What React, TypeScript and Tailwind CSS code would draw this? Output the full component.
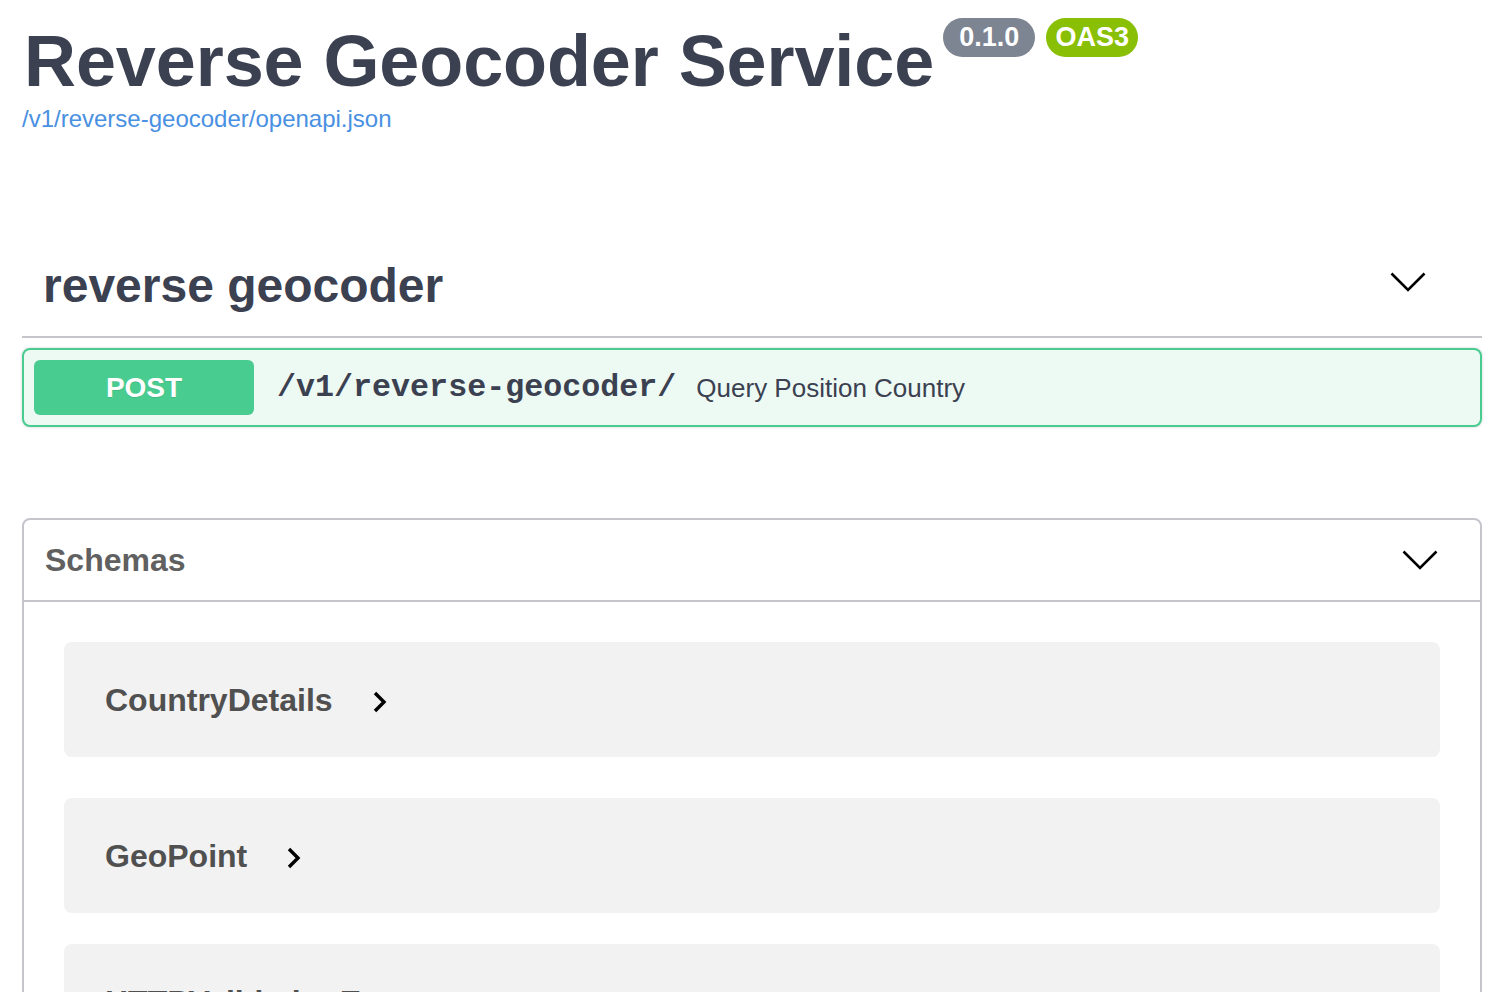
import React from 'react';

const sans = { fontFamily: '"Liberation Sans", Arial, sans-serif' };

function ChevronDown() {
  return (
    <svg width="36" height="20" viewBox="0 0 36 20" fill="none">
      <path d="M1.5 1.5 L18 18 L34.5 1.5" stroke="#000" strokeWidth="2.6" />
    </svg>
  );
}

function ChevronRight() {
  return (
    <svg width="14" height="22" viewBox="0 0 14 22" fill="none">
      <path d="M2 2 L11 11 L2 20" stroke="#000" strokeWidth="3.4" />
    </svg>
  );
}

function ModelItem({ name, className }: { name: string; className?: string }) {
  return (
    <div className={`mx-[40px] h-[115px] rounded-[8px] bg-[#f2f2f2] flex items-center pl-[41px] ${className ?? ''}`}>
      <span className="text-[32px] font-bold leading-none text-[#505050]">{name}</span>
      <span className="ml-[40px] mt-[4px] flex">
        <ChevronRight />
      </span>
    </div>
  );
}

export default function App() {
  return (
    <div className="min-h-screen bg-white text-[#3b4151] overflow-hidden" style={sans}>
      <div className="w-[1460px] ml-[22px] pt-[25px]">
        {/* info */}
        <div className="flex items-start pl-[2px]">
          <h2 className="text-[72px] font-bold leading-none text-[#3b4151] tracking-[-0.1px]">Reverse Geocoder Service</h2>
          <div className="flex gap-[11px] ml-[9px] -mt-[7px]">
            <span className="h-[39px] w-[92px] rounded-full bg-[#7d8492] text-white text-[27px] font-bold flex items-center justify-center">0.1.0</span>
            <span className="h-[39px] w-[92px] rounded-full bg-[#89bf04] text-white text-[27px] font-bold flex items-center justify-center">OAS3</span>
          </div>
        </div>
        <a className="block mt-[10px] text-[24px] leading-none text-[#4990e2]">/v1/reverse-geocoder/openapi.json</a>

        {/* tag */}
        <div className="mt-[131px] flex items-start justify-between border-b-2 border-[#c4c6cb] pl-[21px] pr-[56px] pb-[26px]">
          <h3 className="text-[48px] font-bold leading-none text-[#3b4151]">reverse geocoder</h3>
          <span className="mt-[10px] flex">
            <ChevronDown />
          </span>
        </div>

        <div className="mt-[10px] flex items-center rounded-[8px] border-2 border-[#49cc90] bg-[#edfaf4] p-[10px] shadow-[0_0_3px_rgba(0,0,0,0.19)]">
          <span className="h-[55px] w-[220px] rounded-[6px] bg-[#49cc90] text-white text-[28px] font-bold flex items-center justify-center [text-shadow:0_1px_0_rgba(0,0,0,0.1)]">POST</span>
          <span className="ml-[23px] mt-[2px] text-[31.7px] font-bold text-[#3b4151]" style={{ fontFamily: '"Liberation Mono", "Courier New", monospace' }}>/v1/reverse-geocoder/</span>
          <span className="ml-[20px] mt-[2px] text-[26px] text-[#3b4151]">Query Position Country</span>
        </div>

        {/* schemas */}
        <div className="mt-[91px] rounded-[8px] border-2 border-[#c4c6cb] pb-[40px]">
          <div className="flex items-center justify-between border-b-2 border-[#c4c6cb] pl-[21px] pr-[42px] py-[24px]">
            <h4 className="text-[32px] font-bold leading-none text-[#606060]">Schemas</h4>
            <ChevronDown />
          </div>
          <ModelItem name="CountryDetails" className="mt-[40px]" />
          <ModelItem name="GeoPoint" className="mt-[41px]" />
          <ModelItem name="HTTPValidationError" className="mt-[31px]" />
        </div>
      </div>
    </div>
  );
}
